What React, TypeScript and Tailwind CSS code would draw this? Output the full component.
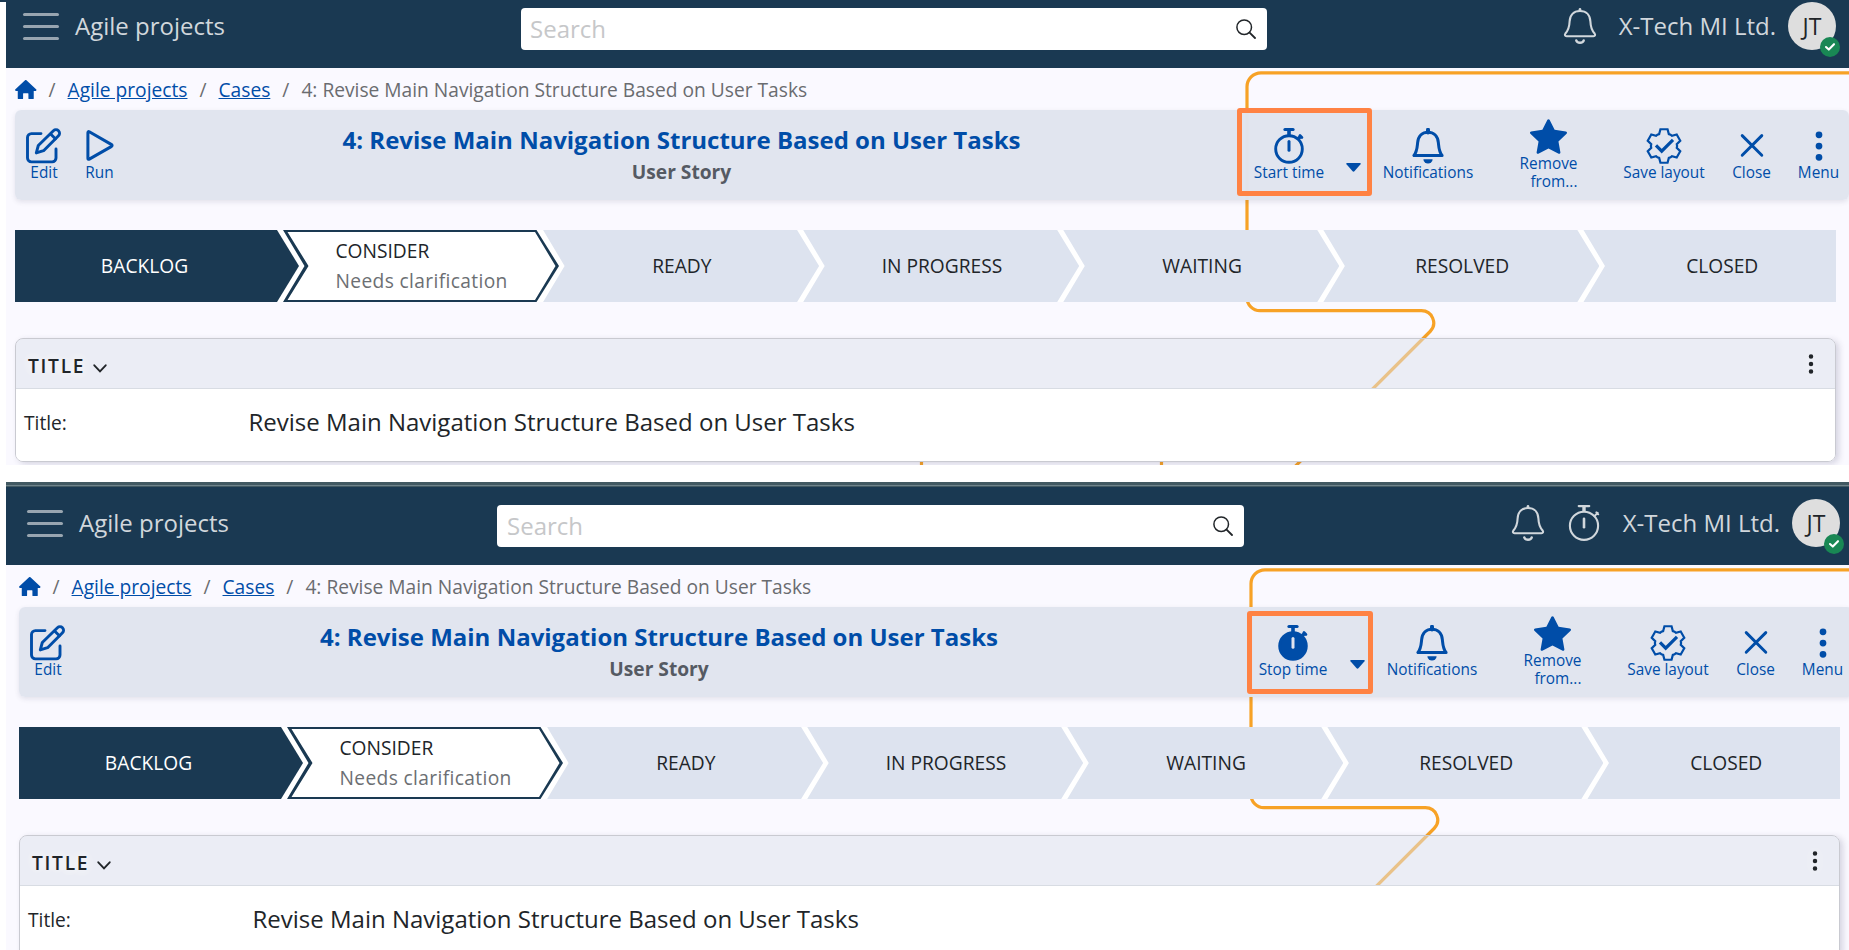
import type { ReactNode } from "react";
import { BsStarFill, BsThreeDotsVertical } from "react-icons/bs";

const CASE_TITLE = "Revise Main Navigation Structure Based on User Tasks";

function EditIcon() {
  return (
    <svg viewBox="0 0 36 36" className="size-9" fill="none" stroke="currentColor" strokeWidth="2.9" strokeLinecap="round" strokeLinejoin="round">
      <path d="M15 5.6H5.4A3.9 3.9 0 0 0 1.5 9.5V30a3.9 3.9 0 0 0 3.9 3.9H26.2A3.9 3.9 0 0 0 30 30V21" />
      <path d="M10.3 24.9l2-7.4L27.4 2.7a3.6 3.6 0 0 1 5.1 5.1L17.6 22.7z" />
      <path d="M24.6 6l4.8 4.8" />
    </svg>
  );
}

function RunIcon() {
  return (
    <svg viewBox="0 0 36 36" className="size-9" fill="none" stroke="currentColor" strokeWidth="3" strokeLinejoin="round">
      <path d="M7.3 3.8Q5.9 3.1 5.9 4.7V30.3Q5.9 31.9 7.3 31.1L29.2 18.6Q31 17.5 29.2 16.4Z" />
    </svg>
  );
}

function TimerIcon({ running }: { running: boolean }) {
  return (
    <svg viewBox="0 0 36 36" className="size-9" fill="none" stroke="currentColor" strokeLinecap="round">
      <path d="M13.9 1.5h8.2" strokeWidth="3" />
      <path d="M18 2v5M26.5 11.5l3.2-3.2" strokeWidth="3.6" strokeLinecap="butt" />
      <path d="M29 7.6l1.9 1.9" strokeWidth="2.8" />
      <circle cx="18" cy="21" r="13.3" strokeWidth="2.9" fill={running ? "currentColor" : "none"} />
      <path d="M18 13.5v8.8" strokeWidth="3" stroke={running ? "#e0e4ef" : "currentColor"} />
    </svg>
  );
}

function BellIcon() {
  return (
    <svg viewBox="0 0 36 36" className="size-9" fill="none" stroke="currentColor" strokeWidth="3" strokeLinejoin="round">
      <path d="M3.9 27.5H32.1C28.9 23.5 28.9 20 28.4 14.8C27.8 7.8 23.4 4.2 18 4.2S8.2 7.8 7.6 14.8C7.1 20 7.1 23.5 3.9 27.5Z" />
      <path d="M18 4.5V1.7" strokeWidth="4" strokeLinecap="round" />
      <path d="M13.4 31.2h9.2a4.6 4.3 0 0 1-9.2 0z" fill="currentColor" stroke="none" />
    </svg>
  );
}

function HeaderBellIcon() {
  return (
    <svg viewBox="0 0 36 36" className="mt-[5.5px] size-9" fill="none" stroke="currentColor" strokeWidth="2.1" strokeLinejoin="round" strokeLinecap="round">
      <path d="M18 3C11.500 3 7.900 7.200 7.600 13.500C7.400 19.500 6.500 22 3.400 25.500C2.400 27 3 28.200 4.500 28.200H31.500C33 28.200 33.600 27 32.600 25.500C29.500 22 28.600 19.500 28.400 13.500C28.100 7.200 24.500 3 18 3Z" />
      <path d="M18 2.800V1.300" strokeWidth="2.600" />
      <path d="M14.300 32.500C15 35.400 21 35.400 21.700 32.500" strokeWidth="2.500" />
    </svg>
  );
}

function HeaderTimerIcon() {
  return (
    <svg viewBox="0 0 36 36" className="mt-[5.5px] ml-[19.5px] size-9" fill="none" stroke="currentColor" strokeWidth="2.1" strokeLinecap="round">
      <path d="M12.700 1.100H23.300" />
      <path d="M18 1.500V6.500" strokeWidth="3.400" strokeLinecap="butt" />
      <circle cx="18" cy="20.800" r="14.100" />
      <path d="M28.300 11.200L31.800 7.800M30.300 7.300L32.300 9.300" strokeWidth="1.900" />
      <path d="M18 13.800V22.300" strokeWidth="2.600" />
    </svg>
  );
}

function SearchIcon() {
  return (
    <svg viewBox="0 0 20 20" className="size-5" fill="none" stroke="#212529" strokeWidth="1.5" strokeLinecap="round">
      <circle cx="8.200" cy="8.200" r="7.300" />
      <path d="M13.600 13.600L19 19" strokeWidth="1.800" />
    </svg>
  );
}

function GearCheckIcon() {
  const at = (deg: number, r: number) => {
    const a = (deg * Math.PI) / 180;
    return `${(18 + r * Math.sin(a)).toFixed(2)} ${(18 - r * Math.cos(a)).toFixed(2)}`;
  };
  const points = [0, 60, 120, 180, 240, 300].flatMap((a) => [at(a - 22, 12.9), at(a - 12, 17.1), at(a + 12, 17.1), at(a + 22, 12.9), at(a + 30, 13.1)]);
  return (
    <svg viewBox="0 0 36 36" className="size-9" fill="none" stroke="currentColor">
      <path d={`M${points.join("L")}Z`} strokeWidth="2.2" />
      <path d="M10 17.4l5.7 5.8L27 11.8" strokeWidth="3.2" />
    </svg>
  );
}

function CloseIcon() {
  return (
    <svg viewBox="0 0 36 36" className="size-9" fill="none" stroke="currentColor" strokeWidth="2.9" strokeLinecap="round">
      <path d="M8.2 7.6l19.6 19.6M27.8 7.6L8.2 27.2" />
    </svg>
  );
}

function HomeIcon() {
  return (
    <svg viewBox="0 0 64 58" className="h-[19.3px] w-[21.5px] shrink-0" fill="currentColor" stroke="currentColor" strokeLinejoin="round">
      <path d="M32 3L61 30H3Z" strokeWidth="6" />
      <path d="M11 28V55H21V41q0-4 4-4H39q4 0 4 4V55H53V28Z" strokeWidth="6" />
    </svg>
  );
}

function Action({ icon, label, className }: { icon: ReactNode; label: string; className: string }) {
  return (
    <button className={`flex shrink-0 flex-col items-center pt-[18px] ${className}`}>
      {icon}
      <span className="text-[15.36px] leading-[17px] whitespace-nowrap">{label}</span>
    </button>
  );
}

function TopBar({ timing }: { timing: boolean }) {
  return (
    <header className={`flex shrink-0 items-start bg-[#1a3952] text-[#d1d7dc] ${timing ? "h-[78px] pt-3 pr-[9px] pl-1" : "h-[66px] pr-[13px]"}`}>
      <div className={`flex shrink-0 ${timing ? "w-[487px]" : "w-[515px]"}`}>
        <div className="mt-[11px] ml-[16.5px] flex w-9 shrink-0 flex-col gap-[9px]">
          <span className="h-[3px] rounded-full bg-[#98a5b0]" />
          <span className="h-[3px] rounded-full bg-[#98a5b0]" />
          <span className="h-[3px] rounded-full bg-[#98a5b0]" />
        </div>
        <span className="mt-[6px] ml-[16.5px] text-2xl leading-9">Agile projects</span>
      </div>
      <div className={`mt-[6px] flex h-[42px] shrink-0 items-start rounded-[4px] bg-white pr-[11px] ${timing ? "w-[747px] pl-[10px]" : "w-[746px] pl-[9px]"}`}>
        <span className="flex-1 text-2xl leading-[41px] text-[#c6c7c9]">Search</span>
        <span className="pt-[11px]"><SearchIcon /></span>
      </div>
      <div className="ml-auto flex">
        <HeaderBellIcon />
        {timing && <HeaderTimerIcon />}
        <span className="mt-[6px] ml-[21px] text-2xl leading-9">X-Tech MI Ltd.</span>
        <div className="relative ml-[12px] flex size-12 items-center justify-center rounded-full bg-[#dedede] text-[23px] leading-none text-[#212529]">
          JT
          <span className="absolute top-[34.5px] left-[32px] flex size-5 items-center justify-center rounded-full bg-[#198754]">
            <svg viewBox="0 0 12 10" className="h-[10px] w-[12px]" fill="none" stroke="#fff" strokeWidth="2.1" strokeLinecap="round" strokeLinejoin="round">
              <path d="M2 5L4.800 7.600L10 2.200" />
            </svg>
          </span>
        </div>
      </div>
    </header>
  );
}

function Toolbar({ timing }: { timing: boolean }) {
  return (
    <div className={`relative flex h-[90px] w-[1834px] shrink-0 rounded-[6px] bg-[#e0e4ef]/98 text-[#004da8] shadow-[0_2px_5px_rgba(60,60,90,0.12)] ${timing ? "ml-[13px]" : "ml-[9px]"}`}>
      <div className="flex shrink-0">
        <Action icon={<EditIcon />} label="Edit" className="w-[58px]" />
        {!timing && <Action icon={<RunIcon />} label="Run" className="w-[53px]" />}
      </div>
      <div className="flex flex-1 flex-col items-center">
        <h1 className="mt-[12px] text-2xl leading-9 font-bold">4: {CASE_TITLE}</h1>
        <span className="-mt-px text-[19.2px] leading-[30px] font-bold text-[#555a63]">User Story</span>
      </div>
      <div className="flex w-[612px] shrink-0">
        <Action icon={<TimerIcon running={timing} />} label={timing ? "Stop time" : "Start time"} className="w-[104px]" />
        <button className="flex w-[25px] shrink-0 justify-center pt-[53px]">
          <svg viewBox="0 0 15 9" className="h-[9px] w-[15px]" fill="currentColor">
            <path d="M1 0h13q1.4 0 .5 1.2L8.600 8.100q-1.100 1.100-2.200 0L.5 1.200Q-.4 0 1 0z" />
          </svg>
        </button>
        <Action icon={<BellIcon />} label="Notifications" className="w-[124px]" />
        <button className="flex w-[117px] shrink-0 flex-col items-center pt-[8px]">
          <BsStarFill className="size-[37px]" />
          <span className="text-right text-[15.36px] leading-[17.5px]">
            Remove
            <br />
            from...
          </span>
        </button>
        <Action icon={<GearCheckIcon />} label="Save layout" className="w-[114px]" />
        <Action icon={<CloseIcon />} label="Close" className="w-[61px]" />
        <Action icon={<BsThreeDotsVertical className="size-9" />} label="Menu" className="w-[67px] pl-[6px]" />
      </div>
      {timing ? (
        <div className="absolute top-1 left-[1228px] h-[83px] w-[126px] rounded-[3px] border-[5px] border-[#ff8243]" />
      ) : (
        <div className="absolute -top-[2px] left-[1222px] h-[88px] w-[135px] rounded-[3px] border-[5px] border-[#ff8243]" />
      )}
    </div>
  );
}

const LATER_STEPS = ["READY", "IN PROGRESS", "WAITING", "RESOLVED"];

function Steps() {
  return (
    <div className="mt-[30px] flex h-[72px] w-[1821px] shrink-0 bg-white text-[19.2px] leading-[30px] text-[#212529]">
      <div className="flex w-[284px] shrink-0 items-center justify-center bg-[#1a3952] pr-[25px] text-white [clip-path:polygon(0_0,262px_0,284px_50%,262px_100%,0_100%)]">BACKLOG</div>
      <div className="-ml-4 flex w-[276.1px] shrink-0 bg-[#1a3952] [clip-path:polygon(0_0,253.500px_0,276px_50%,253.500px_100%,0_100%,21.500px_50%)]">
        <div className="flex w-full flex-col justify-center bg-white pl-[52.5px] [clip-path:polygon(4.500px_2px,252px_2px,272.500px_50%,252px_70px,4.500px_70px,25.500px_50%)]">
          <span>CONSIDER</span>
          <span className="tracking-[0.36px] text-[#6c6f73]">Needs clarification</span>
        </div>
      </div>
      {LATER_STEPS.map((step) => (
        <div key={step} className="-ml-4 flex w-[276.1px] shrink-0 items-center justify-center bg-[#dde3ef] pl-[1.5px] [clip-path:polygon(0_0,254px_0,276px_50%,254px_100%,0_100%,21.500px_50%)]">
          {step}
        </div>
      ))}
      <div className="-ml-4 flex flex-1 items-center justify-center bg-[#dde3ef] pl-[25px] [clip-path:polygon(0_0,100%_0,100%_100%,0_100%,21.500px_50%)]">CLOSED</div>
    </div>
  );
}

function TitleCard() {
  return (
    <section className="mt-9 flex h-[124px] w-[1821px] shrink-0 flex-col rounded-[8px] border border-[#c9cad1] text-[#212529] shadow-[3px_2px_6px_rgba(50,50,90,0.18)]">
      <div className="flex h-[50px] shrink-0 items-center rounded-t-[7px] border-b border-[#d8dce3] bg-[rgba(220,226,236,0.5)] pr-[12px] pl-[12px]">
        <h2 className="pt-[5px] text-[19.2px] leading-[30px] font-semibold tracking-[1.7px] [text-shadow:0_0_8px_#fff,0_0_16px_#fff]">TITLE</h2>
        <svg viewBox="0 0 14 9" className="mt-[9px] ml-[7.5px] h-[9px] w-[14px]" fill="none" stroke="currentColor" strokeWidth="1.9" strokeLinecap="round">
          <path d="M1.300 1.300L7 7.300l5.700-6" />
        </svg>
        <BsThreeDotsVertical className="ml-auto size-6 drop-shadow-[0_0_6px_#fff]" />
      </div>
      <div className="flex flex-1 items-start rounded-b-[7px] bg-white pt-[18px]">
        <span className="w-[232.5px] pl-[8px] text-[19.2px] leading-[32px]">Title:</span>
        <span className="text-2xl leading-[30px]">{CASE_TITLE}</span>
      </div>
    </section>
  );
}

function Panel({ timing }: { timing: boolean }) {
  return (
    <div className="ml-[6px] flex h-[463px] shrink-0 flex-col overflow-hidden">
      <TopBar timing={timing} />
      <main className="relative isolate flex flex-1 flex-col bg-[#faf9ff]">
        <svg viewBox="6 68 1843 397" className={`absolute top-0 -z-10 h-[397px] w-[1843px] overflow-visible ${timing ? "left-1" : "left-0"}`} fill="none" stroke="#f7a226" strokeWidth="3.200">
          <path d="M1860 72.800H1261a14 14 0 0 0-14 14V297.700a13 13 0 0 0 13 13H1421.500a12.200 12.200 0 0 1 8.600 20.800L1290 471.600" />
          <path d="M921.500 450V480M1161.500 450V480" />
        </svg>
        <nav className={`flex h-[42px] shrink-0 items-center gap-3 text-[19.2px] leading-[43px] text-[#6a6c70] ${timing ? "pl-[13px]" : "pl-[9px]"}`}>
          <span className="pt-px text-[#004da8]"><HomeIcon /></span>
          <span>/</span>
          <a className="text-[#004da8] underline">Agile projects</a>
          <span>/</span>
          <a className="text-[#004da8] underline">Cases</a>
          <span>/</span>
          <span>4: {CASE_TITLE}</span>
        </nav>
        <Toolbar timing={timing} />
        <div className={timing ? "pl-[13px]" : "pl-[9px]"}>
          <Steps />
          <TitleCard />
        </div>
      </main>
    </div>
  );
}

export default function App() {
  return (
    <div className="flex h-[950px] w-[1849px] flex-col overflow-hidden bg-white font-['Open_Sans',sans-serif]">
      <div className="h-[2px] shrink-0 bg-[#1a3952]" />
      <Panel timing={false} />
      <div className="mt-[17px] ml-[6px] h-[5px] shrink-0 border-t-[3px] border-b border-[#425962] bg-[#6f838b]" />
      <Panel timing={true} />
    </div>
  );
}
